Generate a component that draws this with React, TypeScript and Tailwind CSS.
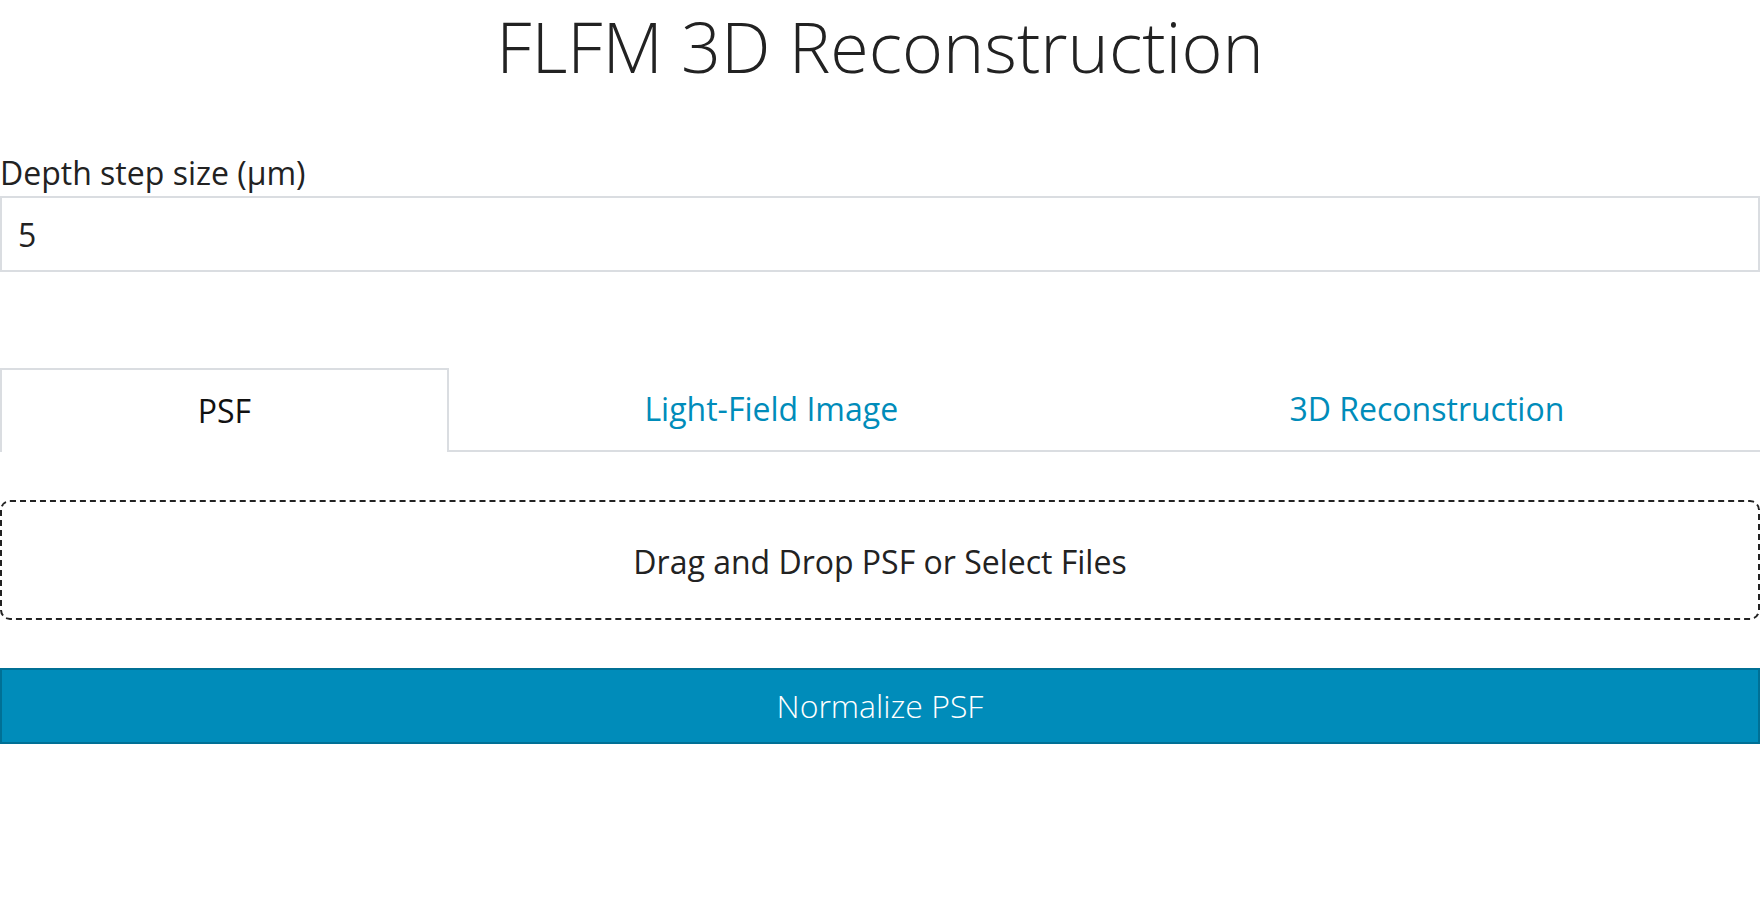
import { useState } from 'react'

const tabs = ['PSF', 'Light-Field Image', '3D Reconstruction']

export default function App() {
  const [active, setActive] = useState(0)
  const [depth, setDepth] = useState('5')

  return (
    <div className="min-h-screen bg-white text-[#222] font-['Open_Sans',sans-serif]">
      <h1 className="text-center text-[70px] font-light leading-[92px]">FLFM 3D Reconstruction</h1>

      <label className="mt-[61px] block text-[32px] leading-[40px]">Depth step size (μm)</label>
      <input
        value={depth}
        onChange={(e) => setDepth(e.target.value)}
        className="mt-[3px] block h-[76px] w-full border-2 border-[#dadde1] px-4 text-[32px] text-[#222] outline-none"
      />

      <div className="mt-[96px] flex h-[84px]">
        {tabs.map((tab, i) => (
          <button
            key={tab}
            onClick={() => setActive(i)}
            className={`flex flex-auto items-center justify-center px-4 text-[32px] ${
              active === i
                ? 'border-x-2 border-t-2 border-[#dadde1] text-[#111]'
                : 'border-b-2 border-[#dadde1] text-[#008cba]'
            }`}
          >
            {tab}
          </button>
        ))}
      </div>

      <div className="mt-[48px] flex h-[120px] items-center justify-center rounded-[10px] border-2 border-dashed border-[#222] pt-1 text-[32px]">
        Drag and Drop PSF or Select Files
      </div>

      <button className="mt-[48px] block h-[76px] w-full border-2 border-[#007095] bg-[#008cba] text-[32px] font-light text-white">
        Normalize PSF
      </button>
    </div>
  )
}
